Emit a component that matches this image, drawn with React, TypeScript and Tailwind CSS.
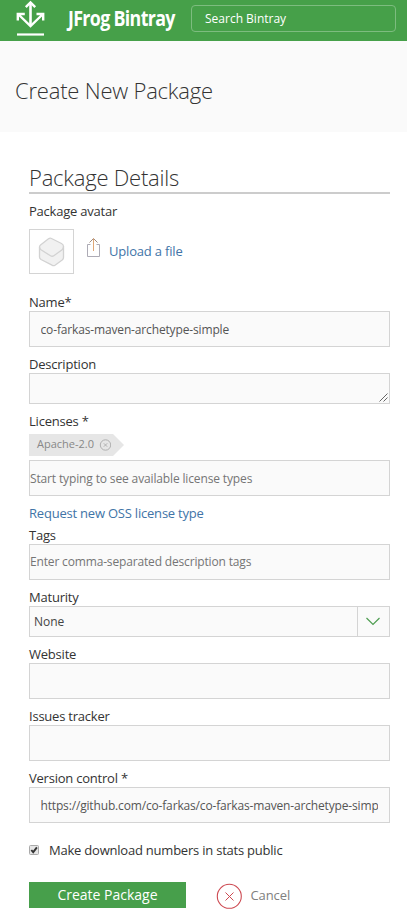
import React from "react";

const box = "w-full border border-[#d4d4d4] bg-[#fafafa] outline-none block";

function Label({ children, className = "" }: { children: React.ReactNode; className?: string }) {
  return <label className={`block h-[18px] whitespace-nowrap text-[13px] leading-[18px] tracking-[-0.22px] text-[#333] ${className}`}>{children}</label>;
}

function Header() {
  return (
    <header className="flex h-[41px] items-start bg-[#46a049] text-white">
      <svg className="ml-4 h-[41px] w-[30px] shrink-0" viewBox="0 0 30 41" fill="none" stroke="#fff">
        <path d="M14.5 3v22" strokeWidth="2.6" />
        <path d="M9.8 7.2l4.7-4.7 4.7 4.7" strokeWidth="2.4" />
        <path d="M1.8 20.5v-6.5h7M20.5 14h6.7v6.5M2.5 14.5l12 11.500L26.5 14.500" strokeWidth="2.4" />
        <path d="M1 34.5h27" strokeWidth="2.2" />
      </svg>
      <div className="ml-[22px] mt-[5px] w-[107px] shrink-0 whitespace-nowrap text-[21px] leading-[26px] font-bold">
        <span className="inline-block origin-left scale-x-[0.85] tracking-[-0.8px]">JFrog Bintray</span>
      </div>
      <div className="ml-4 mt-[5px] flex h-[27px] w-[205px] items-center rounded-[4px] border border-[#7dbc7f] pl-[13px] text-[12px]">
        Search Bintray
      </div>
    </header>
  );
}

export default function App() {
  return (
    <div className="h-[919px] w-[407px] overflow-hidden bg-white font-['Open_Sans','Noto_Sans',sans-serif]">
      <Header />
      <div className="flex h-[91px] items-center bg-[#fafafa] pt-[7px] pl-[15px]">
        <h1 className="whitespace-nowrap text-[22px] leading-[30px] font-light tracking-[-0.2px] text-[#333]">Create New Package</h1>
      </div>
      <main className="ml-[29px] w-[361px]">
        <h2 className="mt-[30px] h-[32px] whitespace-nowrap border-b-2 border-[#ccc] text-[22px] leading-[30px] font-light tracking-[-0.22px] text-[#333]">Package Details</h2>
        <Label className="mt-[8px]">Package avatar</Label>
        <div className="mt-[9px] flex h-[45px]">
          <div className="flex h-[45px] w-[45px] items-center justify-center border border-[#d4d4d4]">
            <svg width="27" height="30" viewBox="0 0 27 30" fill="#f1f1f1" stroke="#d2d2d2" strokeWidth="1.3" strokeLinejoin="round">
              <path d="M10.5 1.800Q12 .8 13.500 1.500L23.500 6.500Q25.500 7.500 25.500 9.500V20.500Q25.500 22 24.200 23L17 28.200Q15.500 29.200 14 28.200L3 22.500Q1.500 21.500 1.500 20V10.500Q1.300 9 2.500 8z" />
              <path d="M1.500 10Q1.500 11.500 3 12.700L12.500 18.800Q14.200 19.800 15.800 18.700L23.800 13Q25.500 11.700 25.500 9.500" fill="none" />
            </svg>
          </div>
          <svg className="ml-[12px] mt-[8px]" width="15" height="21" viewBox="0 0 15 21" fill="none">
            <path d="M4.500 7.500H1.500v12h12v-12h-3" stroke="#adabb5" />
            <path d="M3.500 5.500l4-4 4 4" stroke="#a08c80" />
            <path d="M7.500 14V1.500" stroke="#dfa878" />
          </svg>
          <span className="ml-[8px] mt-[13px] whitespace-nowrap text-[13px] leading-[18px] tracking-[-0.18px] text-[#4174a7]">Upload a file</span>
        </div>

        <Label className="mt-[19px]">Name*</Label>
        <input className={`${box} h-[36px] pr-[11px] pl-[10.5px] text-[12px] tracking-[-0.15px] text-[#555]`} defaultValue="co-farkas-maven-archetype-simple" />

        <Label className="mt-[8px]">Description</Label>
        <div className={`${box} flex h-[31px] items-end justify-end`}>
          <svg width="10" height="10" viewBox="0 0 10 10" stroke="#555" strokeWidth="0.9">
            <path d="M.5 8.5l8-8M4.500 8.500l4-4" />
          </svg>
        </div>

        <Label className="mt-[8px]">Licenses *</Label>
        <div className="mt-[4px] flex h-[22px] w-[95px] items-center bg-[#e6e6e6] pl-[8px] pb-px text-[11px] text-[#888] [clip-path:polygon(0_0,84px_0,100%_50%,84px_100%,0_100%)]">
          <span className="w-[62px] whitespace-nowrap">Apache-2.0</span>
          <svg width="12" height="12" viewBox="0 0 12 12" fill="none" stroke="#aaa" strokeWidth="0.9">
            <circle cx="6.500" cy="6" r="5.200" />
            <path d="M4.800 4.300l3.400 3.400M8.200 4.300l-3.400 3.400" />
          </svg>
        </div>
        <input className={`${box} mt-[4px] h-[36px] text-[12px] tracking-[-0.14px] placeholder:text-[#757575]`} placeholder="Start typing to see available license types" />
        <a className="mt-[8px] block whitespace-nowrap text-[13px] leading-[18px] tracking-[-0.21px] text-[#4174a7]">Request new OSS license type</a>

        <Label className="mt-[4px]">Tags</Label>
        <input className={`${box} h-[36px] pb-[2px] text-[12px] tracking-[-0.16px] placeholder:text-[#757575]`} placeholder="Enter comma-separated description tags" />

        <Label className="mt-[8px]">Maturity</Label>
        <div className={`${box} flex h-[31px] text-[12px] leading-[30px] text-[#444]`}>
          <span className="flex-1 pl-[4px]">None</span>
          <span className="flex w-[32px] items-center justify-center border-l border-[#d4d4d4] pr-px">
            <svg width="14" height="9" viewBox="0 0 14 9" fill="none" stroke="#4e9d51" strokeWidth="1.2">
              <path d="M.5 1L7 7.5 13.500 1" />
            </svg>
          </span>
        </div>

        <Label className="mt-[8px]">Website</Label>
        <input className={`${box} h-[36px]`} />
        <Label className="mt-[8px]">Issues tracker</Label>
        <input className={`${box} h-[36px]`} />
        <Label className="mt-[8px]">Version control *</Label>
        <input className={`${box} h-[36px] pr-[11px] pl-[10.5px] text-[12px] tracking-[-0.16px] text-[#555]`} defaultValue="https://github.com/co-farkas/co-farkas-maven-archetype-simple" />

        <div className="mt-[18px] flex h-[18px] items-center">
          <svg width="10" height="10" viewBox="0 0 10 10">
            <rect x=".5" y=".5" width="9" height="9" rx="1" fill="#e6e6e6" stroke="#a9a9a9" />
            <path d="M2.3 5l1.9 2.200L7.900 2.400" fill="none" stroke="#333" strokeWidth="1.9" />
          </svg>
          <Label className="ml-[10px]">Make download numbers in stats public</Label>
        </div>

        <div className="mt-[23px] flex">
          <button className="flex h-[26px] w-[157px] items-center justify-center whitespace-nowrap bg-[#479f4b] pb-px text-[14px] text-white">Create Package</button>
          <svg className="ml-[30px] mt-[1px]" width="27" height="27" viewBox="0 0 27 27" fill="none" stroke="#cd4a52">
            <circle cx="13.3" cy="13.3" r="12" strokeWidth="1.1" />
            <path d="M9.5 9.5l8 8M17.500 9.500l-8 8" strokeWidth="1" />
          </svg>
          <span className="ml-[7.5px] mt-[4px] text-[13px] leading-[18px] tracking-[-0.1px] text-[#808080]">Cancel</span>
        </div>
      </main>
    </div>
  );
}
